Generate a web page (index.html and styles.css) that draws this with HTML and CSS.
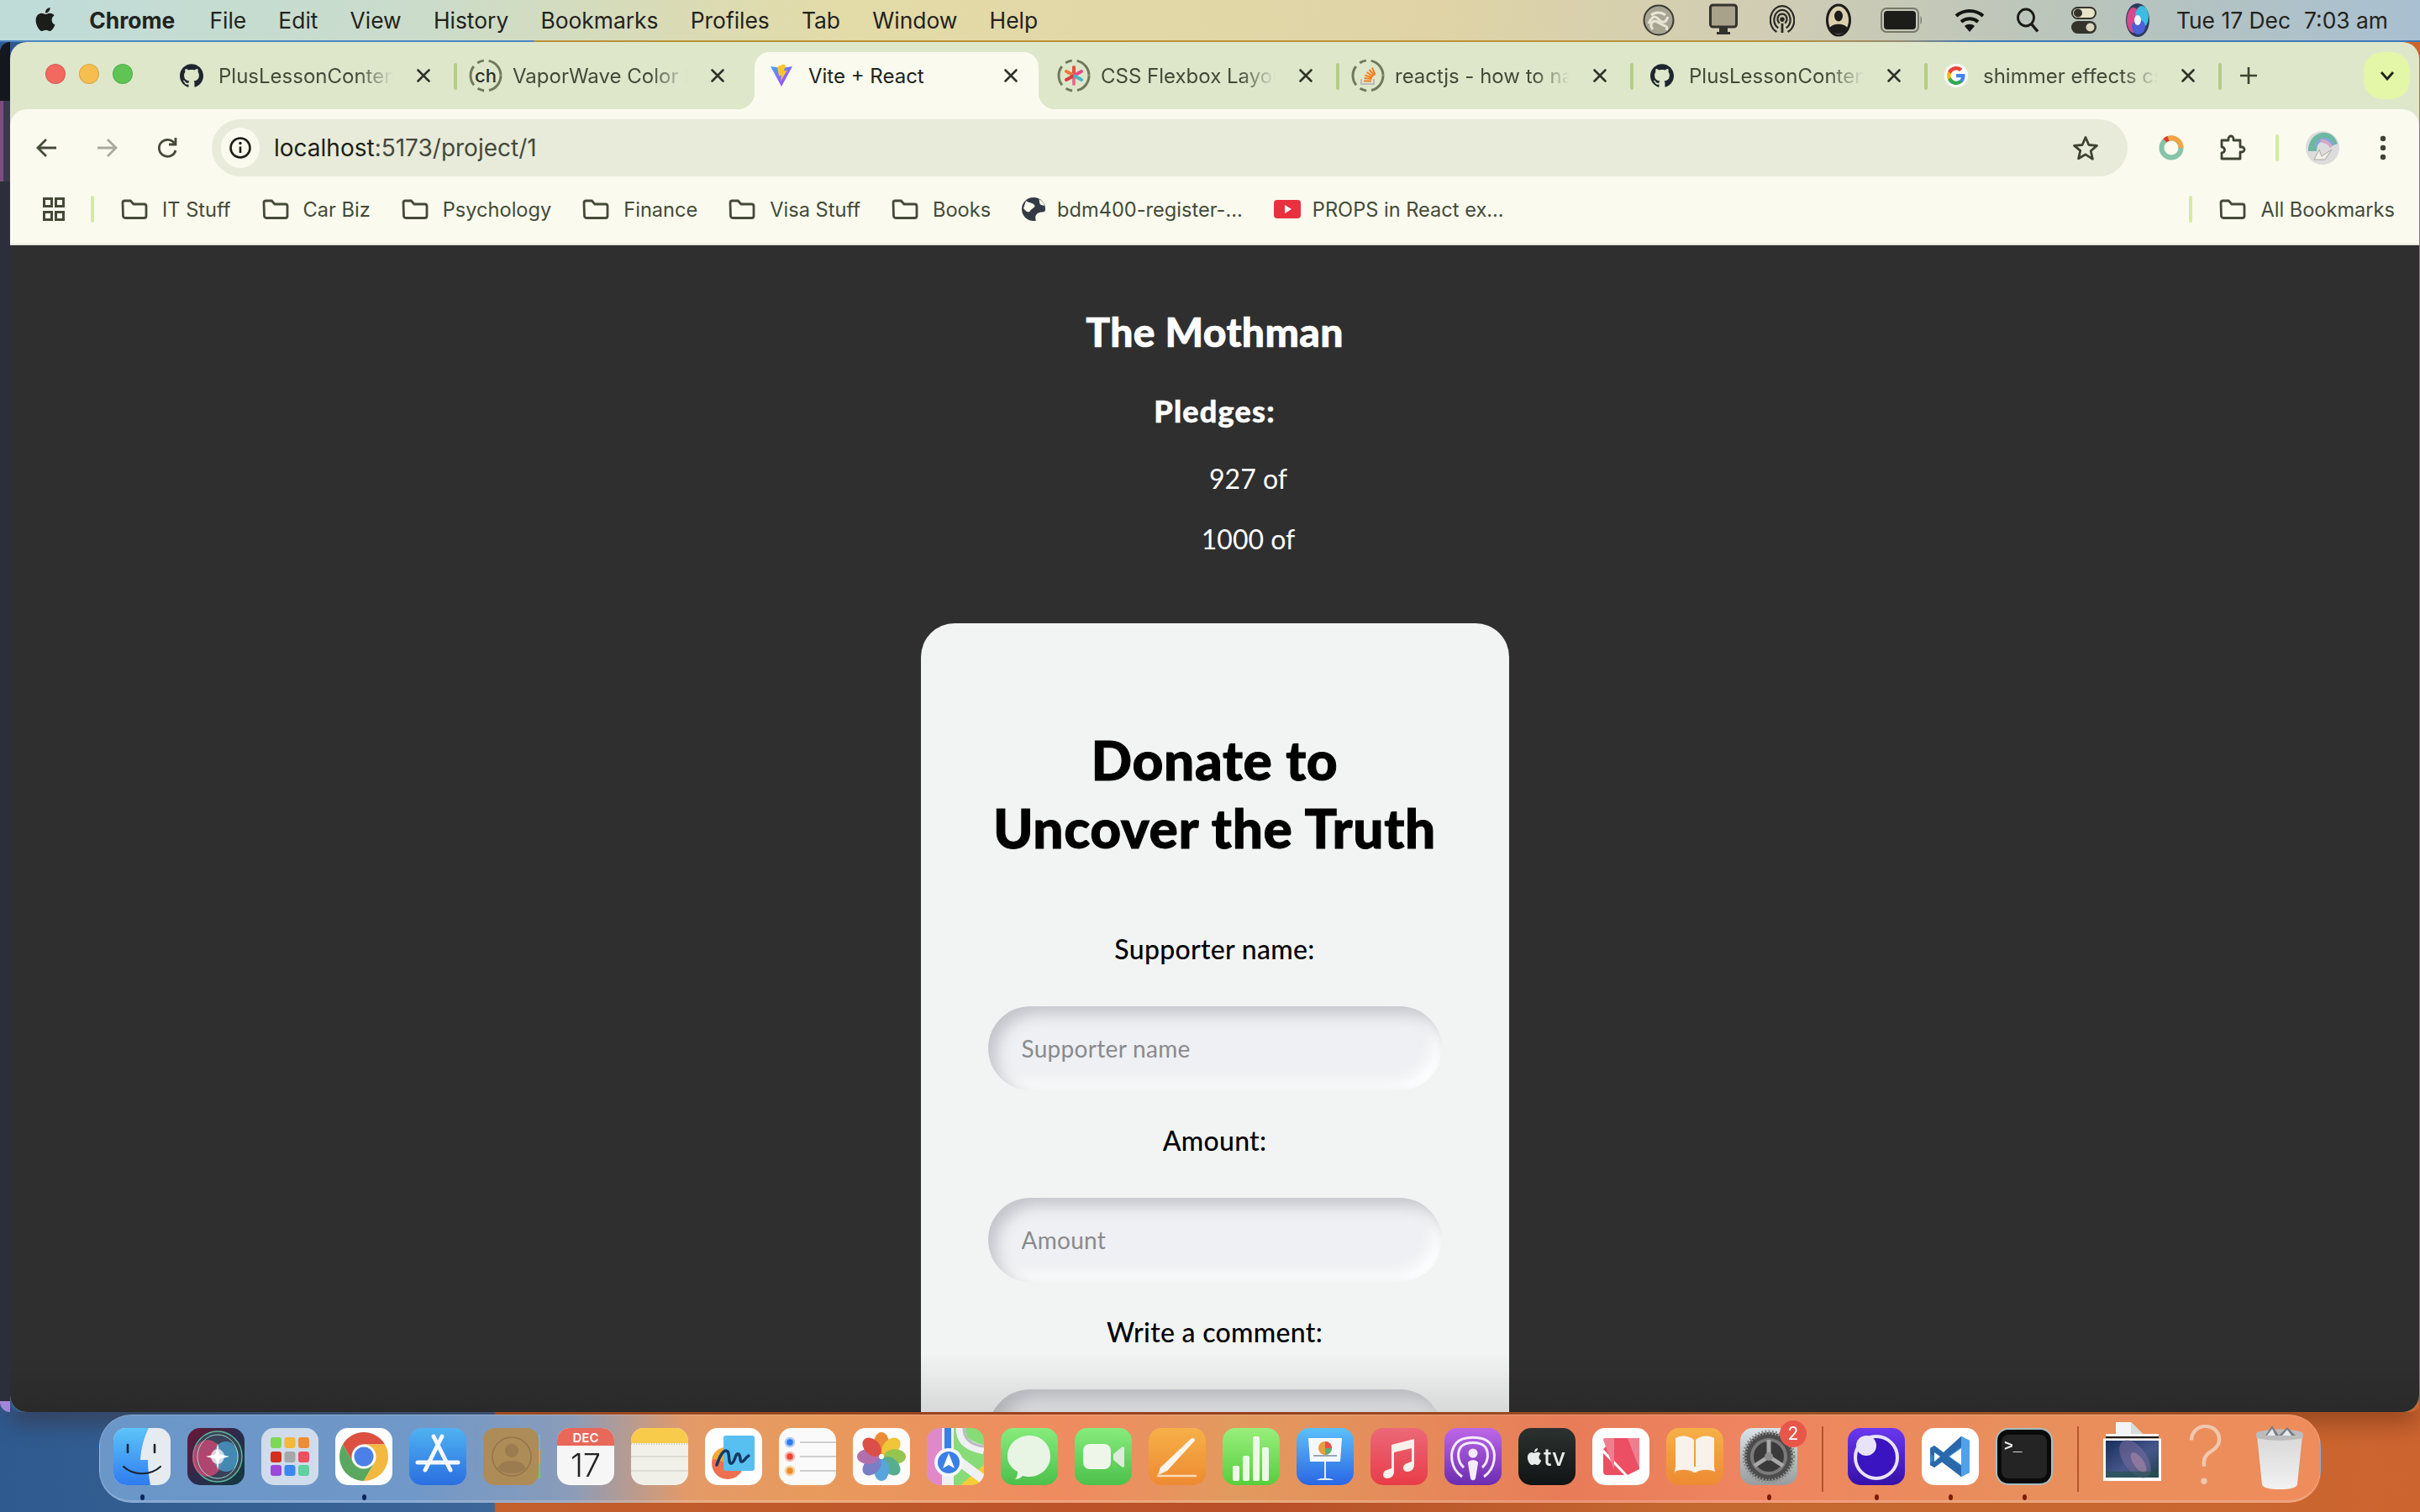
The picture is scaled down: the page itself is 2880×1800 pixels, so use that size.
FILE: index.html
```html
<!DOCTYPE html>
<html lang="en">
<head>
<meta charset="utf-8">
<title>Vite + React</title>
<link rel="stylesheet" href="styles.css">
</head>
<body>
<svg class="defs" aria-hidden="true">
  <defs>
    <linearGradient id="gBlue" x1="0" y1="0" x2="0" y2="1"><stop offset="0" stop-color="#4fb2f2"/><stop offset="1" stop-color="#2a6fe0"/></linearGradient>
    <linearGradient id="gFinder" x1="0" y1="0" x2="0" y2="1"><stop offset="0" stop-color="#5cc4f8"/><stop offset="1" stop-color="#2f7cf0"/></linearGradient>
    <linearGradient id="gSiri" x1="0" y1="0" x2="1" y2="1"><stop offset="0" stop-color="#6c1535"/><stop offset=".5" stop-color="#2c2c4c"/><stop offset="1" stop-color="#103a40"/></linearGradient>
    <linearGradient id="gGreen" x1="0" y1="0" x2="0" y2="1"><stop offset="0" stop-color="#86ec7c"/><stop offset="1" stop-color="#4cc04a"/></linearGradient>
    <linearGradient id="gOrange" x1="0" y1="0" x2="0" y2="1"><stop offset="0" stop-color="#f6b048"/><stop offset="1" stop-color="#ee8a32"/></linearGradient>
    <linearGradient id="gNum" x1="0" y1="0" x2="0" y2="1"><stop offset="0" stop-color="#98ee7c"/><stop offset="1" stop-color="#58ce3c"/></linearGradient>
    <linearGradient id="gKey" x1="0" y1="0" x2="0" y2="1"><stop offset="0" stop-color="#5cc0fa"/><stop offset="1" stop-color="#2a66e4"/></linearGradient>
    <linearGradient id="gMusic" x1="0" y1="0" x2="0" y2="1"><stop offset="0" stop-color="#ec6878"/><stop offset="1" stop-color="#e83c48"/></linearGradient>
    <linearGradient id="gPod" x1="0" y1="0" x2="0" y2="1"><stop offset="0" stop-color="#bc68e8"/><stop offset="1" stop-color="#6c2cb0"/></linearGradient>
    <linearGradient id="gTv" x1="0" y1="0" x2="0" y2="1"><stop offset="0" stop-color="#2c3230"/><stop offset="1" stop-color="#101414"/></linearGradient>
    <linearGradient id="gPurple" x1="0" y1="0" x2="0" y2="1"><stop offset="0" stop-color="#6a38f0"/><stop offset="1" stop-color="#3410a8"/></linearGradient>
    <linearGradient id="gGear" x1="0" y1="0" x2="0" y2="1"><stop offset="0" stop-color="#d8e4e8"/><stop offset="1" stop-color="#9a9c9c"/></linearGradient>
    <linearGradient id="gVite" x1="0" y1="0" x2="1" y2="1"><stop offset="0" stop-color="#41a6ff"/><stop offset="1" stop-color="#bd34fe"/></linearGradient>
    <linearGradient id="gTrash" x1="0" y1="0" x2="0" y2="1"><stop offset="0" stop-color="#d8d8d8"/><stop offset="1" stop-color="#f2f2f2"/></linearGradient>
    <linearGradient id="gSky" x1="0" y1="0" x2="1" y2="1"><stop offset="0" stop-color="#16305c"/><stop offset=".55" stop-color="#46568a"/><stop offset="1" stop-color="#1c4450"/></linearGradient>
    <symbol id="folder" viewBox="0 0 32 24"><path d="M2 4.500a2.500 2.500 0 0 1 2.500-2.500h6.800l3.600 4h12.600a2.500 2.500 0 0 1 2.500 2.500v11.500a2.500 2.500 0 0 1-2.500 2.500h-22.500a2.500 2.500 0 0 1-2.500-2.500z" fill="none" stroke="#454a38" stroke-width="2.800"/></symbol>
    <symbol id="gh" viewBox="0 0 24 24"><path fill="#1f2630" d="M12 .297c-6.630 0-12 5.373-12 12 0 5.303 3.438 9.800 8.205 11.385.600.113.820-.258.820-.577 0-.285-.010-1.040-.015-2.040-3.338.724-4.042-1.610-4.042-1.610C4.422 18.070 3.633 17.700 3.633 17.700c-1.087-.744.084-.729.084-.729 1.205.084 1.838 1.236 1.838 1.236 1.070 1.835 2.809 1.305 3.495.998.108-.776.417-1.305.760-1.605-2.665-.300-5.466-1.332-5.466-5.930 0-1.310.465-2.380 1.235-3.220-.135-.303-.540-1.523.105-3.176 0 0 1.005-.322 3.300 1.230.960-.267 1.980-.399 3-.405 1.020.006 2.040.138 3 .405 2.280-1.552 3.285-1.230 3.285-1.230.645 1.653.240 2.873.120 3.176.765.840 1.230 1.910 1.230 3.220 0 4.610-2.805 5.625-5.475 5.920.420.360.810 1.096.810 2.220 0 1.606-.015 2.896-.015 3.286 0 .315.210.690.825.570C20.565 22.092 24 17.592 24 12.297c0-6.627-5.373-12-12-12"/></symbol>
    <symbol id="closex" viewBox="0 0 20 20"><path d="M3.500 3.500l13 13M16.500 3.500l-13 13" stroke="#2e3228" stroke-width="2.600" fill="none" stroke-linecap="round"/></symbol>
    <symbol id="ring" viewBox="0 0 40 40"><circle cx="20" cy="20" r="18" fill="none" stroke="#6f7a5c" stroke-width="3" stroke-dasharray="24 6 8 6 24 6 8 6"/></symbol>
    <symbol id="apple" viewBox="0 0 24 24"><path d="M12.152 6.896c-.948 0-2.415-1.078-3.960-1.040-2.040.027-3.910 1.183-4.961 3.014-2.117 3.675-.546 9.103 1.519 12.090 1.013 1.454 2.208 3.090 3.792 3.039 1.520-.065 2.090-.987 3.935-.987 1.831 0 2.350.987 3.960.948 1.637-.026 2.676-1.480 3.676-2.948 1.156-1.688 1.636-3.325 1.662-3.415-.039-.013-3.182-1.221-3.220-4.857-.026-3.040 2.480-4.494 2.597-4.559-1.429-2.090-3.623-2.324-4.390-2.376-2-.156-3.675 1.090-4.610 1.090zM15.530 3.830c.843-1.012 1.400-2.427 1.245-3.830-1.207.052-2.662.805-3.532 1.818-.780.896-1.454 2.338-1.273 3.714 1.338.104 2.715-.688 3.559-1.701"/></symbol>
  </defs>
</svg>

<header class="menubar">
  <nav class="menu-left">
    <svg class="apple-logo"><use href="#apple"/></svg>
    <span class="menu-app">Chrome</span>
    <span>File</span><span>Edit</span><span>View</span><span>History</span><span>Bookmarks</span><span>Profiles</span><span>Tab</span><span>Window</span><span>Help</span>
  </nav>
  <div class="menu-right">
    <svg class="mi mi-cc" viewBox="0 0 40 40"><circle cx="20" cy="20" r="17.500" fill="#a8a492" stroke="#3a3a34" stroke-width="2"/><path d="M8 24c3-7 7-11 12-5s9 3 11-3M11 14c5-4 12-4 17 0M13 31c-5-6 0-13 7-8s12 3 9 9" fill="none" stroke="#e8e4d4" stroke-width="3"/></svg>
    <svg class="mi mi-mon" viewBox="0 0 34 40"><rect x="1.500" y="2" width="31" height="26" rx="3" fill="#a9a28a" stroke="#33332d" stroke-width="3"/><path d="M12 29h10v5h3v3H9v-3h3z" fill="#33332d"/></svg>
    <svg class="mi mi-air" viewBox="0 0 32 40" fill="none" stroke="#2a2a26" stroke-width="2.400"><path d="M9 35C1 30 0 21 1.500 15 4 6 10 2 16 2s12 4 14.500 13c1.500 6 1 15-7.500 20"/><path d="M11 30C5 26 5 19 6.500 15 8 10 12 7 16 7s8 3 9.500 8c1.500 4 1.500 11-4.500 15"/><path d="M12.500 24C9.500 21 10 17 11 15c1-2 3-3 5-3s4 1 5 3c1 2 1.500 6-1.500 9"/><circle cx="16" cy="19" r="3" fill="#2a2a26" stroke="none"/><path d="M16 24v12" stroke-width="3"/></svg>
    <svg class="mi mi-usr" viewBox="0 0 30 40"><ellipse cx="15" cy="20" rx="13.500" ry="18" fill="#d8d0ae" stroke="#1c1c1a" stroke-width="3"/><ellipse cx="15" cy="15" rx="5" ry="6.500" fill="#1c1c1a"/><path d="M4 30c3-7 19-7 22 0-3 8-19 8-22 0z" fill="#1c1c1a"/></svg>
    <svg class="mi mi-bat" viewBox="0 0 50 30"><rect x="1" y="1" width="44" height="28" rx="6" fill="none" stroke="#77766a" stroke-width="2"/><rect x="4" y="4" width="38" height="22" rx="4" fill="#1c1c18"/><path d="M47.500 10c2 1 2 9 0 10z" fill="#77766a"/></svg>
    <svg class="mi mi-wifi" viewBox="0 0 36 30" fill="none" stroke="#141410" stroke-width="4"><path d="M2 10c9-8 23-8 32 0M8 17c6-5 14-5 20 0"/><path d="M18 29l-6-7c3-3 9-3 12 0z" fill="#141410" stroke="none"/></svg>
    <svg class="mi mi-search" viewBox="0 0 28 30" fill="none" stroke="#1a1a16" stroke-width="2.800"><ellipse cx="12" cy="12" rx="9.500" ry="10"/><path d="M19 20l7 8.500" stroke-width="3.500"/></svg>
    <svg class="mi mi-ctl" viewBox="0 0 30 32"><rect x="1" y="1" width="28" height="13" rx="6.500" fill="#e8e2c6" stroke="#33332c" stroke-width="2"/><circle cx="8" cy="7.500" r="5" fill="#33332c"/><rect x="0" y="17" width="30" height="15" rx="7.500" fill="#33332c"/><circle cx="22.500" cy="24.500" r="5" fill="#d8d4c0"/></svg>
    <svg class="mi mi-siri" viewBox="0 0 28 40"><ellipse cx="14" cy="20" rx="14" ry="20" fill="#2e3a5c"/><ellipse cx="9" cy="20" rx="8" ry="15" fill="#d8488c"/><ellipse cx="19" cy="16" rx="8" ry="13" fill="#3cbce0"/><ellipse cx="15" cy="28" rx="8" ry="9" fill="#4c60d8"/><ellipse cx="14" cy="20" rx="4" ry="6" fill="#f2f4fa"/></svg>
    <span class="clock"><span>Tue 17 Dec</span><span>7:03 am</span></span>
  </div>
</header>
<div class="menu-line"></div>

<div class="desk">
  <div class="strip"></div>
  <main class="window">
    <div class="tabstrip">
      <div class="lights"><i class="light red"></i><i class="light amber"></i><i class="light green"></i></div>
      <div class="tabs">
        <div class="tab"><svg class="fav"><use href="#gh"/></svg><span class="tab-title">PlusLessonConten</span><svg class="tab-x"><use href="#closex"/></svg></div>
        <div class="tab sep"><span class="fav-ring"><svg class="ring"><use href="#ring"/></svg><span class="ring-ch">ch</span></span><span class="tab-title">VaporWave Color F</span><svg class="tab-x"><use href="#closex"/></svg></div>
        <div class="tab active"><svg class="fav" viewBox="0 0 28 28"><path d="M1 3l13 2 13-2-13 24z" fill="url(#gVite)"/><path d="M16 .500l-7 3 2 11 3-1-1 7 8-13-4 1 2-7z" fill="#fdc52f"/></svg><span class="tab-title">Vite + React</span><svg class="tab-x"><use href="#closex"/></svg></div>
        <div class="tab"><span class="fav-ring"><svg class="ring"><use href="#ring"/></svg><svg class="ring-in" viewBox="0 0 24 24" fill="none" stroke-width="4" stroke-linecap="round"><path d="M12 2v9" stroke="#e8503c"/><path d="M12 13v9" stroke="#e76f8c"/><path d="M3 7l8 4.500" stroke="#ee7a3c"/><path d="M21 7l-8 4.500" stroke="#e84c8c"/><path d="M3 17l8-4.500" stroke="#d83c40"/><path d="M21 17l-8-4.500" stroke="#4cb4c0"/></svg></span><span class="tab-title">CSS Flexbox Layou</span><svg class="tab-x"><use href="#closex"/></svg></div>
        <div class="tab sep"><span class="fav-ring"><svg class="ring"><use href="#ring"/></svg><svg class="ring-in" viewBox="0 0 24 24" fill="none"><path d="M4 16v6h15v-6" stroke="#bcbbbb" stroke-width="2"/><path d="M7 18.500h9M7.500 15l9 1M8.500 11.500l8.500 3M10.500 8l7.500 5M13.500 5l6 7M17 2.500l3.500 8.500" stroke="#f48024" stroke-width="2"/></svg></span><span class="tab-title">reactjs - how to na</span><svg class="tab-x"><use href="#closex"/></svg></div>
        <div class="tab sep"><svg class="fav"><use href="#gh"/></svg><span class="tab-title">PlusLessonConten</span><svg class="tab-x"><use href="#closex"/></svg></div>
        <div class="tab sep"><svg class="fav" viewBox="-2 -2 28 28"><circle cx="12" cy="12" r="14" fill="#fff"/><path fill="#4285F4" d="M22.560 12.250c0-.780-.070-1.530-.200-2.250H12v4.260h5.920c-.260 1.370-1.040 2.530-2.210 3.310v2.770h3.570c2.080-1.920 3.280-4.740 3.280-8.090z"/><path fill="#34A853" d="M12 23c2.970 0 5.460-.980 7.280-2.660l-3.570-2.770c-.980.660-2.230 1.060-3.710 1.060-2.860 0-5.290-1.930-6.160-4.530H2.180v2.840C3.990 20.530 7.700 23 12 23z"/><path fill="#FBBC05" d="M5.840 14.090c-.220-.660-.350-1.360-.350-2.090s.130-1.430.350-2.090V7.070H2.180C1.430 8.550 1 10.220 1 12s.430 3.450 1.180 4.930l2.850-2.220.810-.620z"/><path fill="#EA4335" d="M12 5.380c1.620 0 3.060.560 4.210 1.640l3.150-3.150C17.450 2.090 14.970 1 12 1 7.700 1 3.990 3.470 2.180 7.070l3.660 2.840c.870-2.600 3.300-4.530 6.160-4.530z"/></svg><span class="tab-title">shimmer effects cs</span><svg class="tab-x"><use href="#closex"/></svg></div>
        <div class="tab-new sep"><svg class="plus" viewBox="0 0 22 22"><path d="M11 1v20M1 11h20" stroke="#3e4432" stroke-width="2.600"/></svg></div>
      </div>
      <div class="tab-search"><svg class="chev" viewBox="0 0 18 12"><path d="M2 2l7 8 7-8" fill="none" stroke="#20241a" stroke-width="2.800"/></svg></div>
    </div>

    <div class="toolbar">
      <svg class="nav-btn" viewBox="0 0 28 28"><path d="M25 14H4M13 4L3 14l10 10" fill="none" stroke="#454a38" stroke-width="2.800"/></svg>
      <svg class="nav-btn nav-fwd" viewBox="0 0 28 28"><path d="M3 14h21M15 4l10 10-10 10" fill="none" stroke="#a9ab9f" stroke-width="2.800"/></svg>
      <svg class="nav-btn nav-reload" viewBox="0 0 28 28"><path d="M23 17a10 10 0 1 1-1.500-8.500M23 2v8h-8" fill="none" stroke="#454a38" stroke-width="2.800"/></svg>
      <div class="omni">
        <span class="chip"><svg class="info" viewBox="0 0 26 26"><circle cx="13" cy="13" r="11.500" fill="none" stroke="#1c1e16" stroke-width="2.600"/><path d="M13 11.500v7.500" stroke="#1c1e16" stroke-width="2.600"/><circle cx="13" cy="7.500" r="1.700" fill="#1c1e16"/></svg></span>
        <span class="url"><b>localhost</b>:5173/project/1</span>
        <svg class="star" viewBox="0 0 32 30"><path d="M16 2.500l3.900 9 9.600.9-7.300 6.400 2.200 9.500L16 22.800 7.600 27.800l2.200-9.500L2.500 12.400l9.600-.9z" fill="none" stroke="#3e4432" stroke-width="2.800" stroke-linejoin="round"/></svg>
      </div>
      <svg class="ext-ring" viewBox="0 0 32 32"><circle cx="16" cy="16" r="11.500" fill="none" stroke="#86c3a8" stroke-width="6"/><path d="M8 7.500A11.500 11.500 0 0 1 27.500 16" fill="none" stroke="#f3a444" stroke-width="6"/><path d="M8.500 7.400a11.500 11.500 0 0 1 4-2.500" fill="none" stroke="#de3c34" stroke-width="6"/></svg>
      <svg class="ext-puz" viewBox="0 0 32 32"><path d="M3 7h8V5a3 3 0 0 1 6 0v2h8v8h2a3 3 0 0 1 0 6h-2v8H3v-7a3.500 3.500 0 0 0 0-7z" fill="none" stroke="#3e4432" stroke-width="2.800" stroke-linejoin="round"/></svg>
      <i class="tool-sep"></i>
      <svg class="avatar" viewBox="0 0 40 40"><circle cx="20" cy="20" r="20" fill="#dcdcdc"/><path d="M3 24C3 10 12 2 22 2c8 0 13 5 16 13l-8 3c-1-4-4-7-8-7-5 0-9 5-9 13z" fill="#6cb8a0"/><path d="M10 18c2-6 7-10 13-10 5 0 8 3 11 8l-4 2c-1-4-4-6-8-6s-8 3-9 8z" fill="#7fa7dc"/><path d="M17 10c5-1 11 1 15 8l-3 2c-2-4-6-6-10-6z" fill="#d4a8c8"/><path d="M10 34l6-12 3 8 12-8-8 12z" fill="#f2efe8" stroke="#a8a8a0"/></svg>
      <svg class="dots" viewBox="0 0 8 30"><circle cx="4" cy="4" r="3.200" fill="#3e4432"/><circle cx="4" cy="15" r="3.200" fill="#3e4432"/><circle cx="4" cy="26" r="3.200" fill="#3e4432"/></svg>
    </div>

    <div class="bookmarks">
      <svg class="apps" viewBox="0 0 26 28" fill="none" stroke="#454a38" stroke-width="3"><rect x="1.500" y="1.500" width="9" height="9"/><rect x="15.500" y="1.500" width="9" height="9"/><rect x="1.500" y="17.500" width="9" height="9"/><rect x="15.500" y="17.500" width="9" height="9"/></svg>
      <i class="bm-sep"></i>
      <div class="bm"><svg class="bm-ico"><use href="#folder"/></svg>IT Stuff</div>
      <div class="bm"><svg class="bm-ico"><use href="#folder"/></svg>Car Biz</div>
      <div class="bm"><svg class="bm-ico"><use href="#folder"/></svg>Psychology</div>
      <div class="bm"><svg class="bm-ico"><use href="#folder"/></svg>Finance</div>
      <div class="bm"><svg class="bm-ico"><use href="#folder"/></svg>Visa Stuff</div>
      <div class="bm"><svg class="bm-ico"><use href="#folder"/></svg>Books</div>
      <div class="bm bm-tight"><svg class="bm-globe" viewBox="0 0 28 28"><circle cx="14" cy="14" r="14" fill="#343a44"/><path d="M5 4c4 3 8 2 10 5s-3 4-5 7-5 1-8-3zM17 28c-2-5 0-9 4-10s5 0 7-2c0 6-5 12-11 12zM20 2c2 3 0 5 3 7l4 1c-1-4-3-6-7-8z" fill="#fafbee"/></svg>bdm400-register-...</div>
      <div class="bm bm-tight"><svg class="bm-yt" viewBox="0 0 32 24"><rect width="32" height="22" y="1" rx="4" fill="#e9303f"/><path d="M13 7l8 5-8 5z" fill="#fff"/></svg>PROPS in React ex...</div>
      <i class="bm-sep bm-sep-end"></i>
      <div class="bm bm-all"><svg class="bm-ico"><use href="#folder"/></svg>All Bookmarks</div>
    </div>

    <section class="page">
      <h2 class="project-title">The Mothman</h2>
      <h3 class="pledge-head">Pledges:</h3>
      <ul class="pledge-list">
        <li>927 of</li>
        <li>1000 of</li>
      </ul>
      <form class="card">
        <h2 class="card-title">Donate to<br>Uncover the Truth</h2>
        <label class="field-label" for="sup">Supporter name:</label>
        <input class="field" id="sup" placeholder="Supporter name">
        <label class="field-label" for="amt">Amount:</label>
        <input class="field" id="amt" placeholder="Amount">
        <label class="field-label" for="cmt">Write a comment:</label>
        <input class="field" id="cmt">
      </form>
      <div class="page-fade"></div>
    </section>
  </main>
</div>

<footer class="dock">
  <div class="dk"><svg class="di" viewBox="0 0 68 68"><rect width="68" height="68" rx="15" fill="#e6ebf0"/><path d="M15 0h27c-6 12-9 24-10 38h9c0 10 1 20 3 30H15A15 15 0 0 1 0 53V15A15 15 0 0 1 15 0z" fill="url(#gFinder)"/><path d="M17 20v9M49 20v9" stroke="#1c2430" stroke-width="2.600" stroke-linecap="round"/><path d="M12 46c12 11 32 11 44 0" fill="none" stroke="#1c2430" stroke-width="2.200" stroke-linecap="round"/></svg><i class="dot dot-blue"></i></div>
  <div class="dk"><svg class="di" viewBox="0 0 68 68"><rect width="68" height="68" rx="15" fill="url(#gSiri)"/><ellipse cx="36" cy="34" rx="29" ry="30" fill="#384258" stroke="#5cb89c" stroke-width="1.500"/><ellipse cx="24" cy="36" rx="18" ry="22" fill="#d84878" opacity=".75"/><ellipse cx="46" cy="34" rx="15" ry="18" fill="#48a8d8" opacity=".7"/><ellipse cx="36" cy="34" rx="24" ry="26" fill="none" stroke="#98dcc0" stroke-width="1"/><ellipse cx="36" cy="34" rx="8" ry="9" fill="#fff" opacity=".7"/><path d="M36 18l2 13 12 3-12 3-2 13-2-13-12-3 12-3z" fill="#fff"/></svg></div>
  <div class="dk"><svg class="di" viewBox="0 0 68 68"><rect width="68" height="68" rx="15" fill="#d0dcec"/><g><rect x="11" y="11" width="13" height="13" rx="3" fill="#7ed858"/><rect x="27.500" y="11" width="13" height="13" rx="3" fill="#f4b838"/><rect x="44" y="11" width="13" height="13" rx="3" fill="#ee8c34"/><rect x="11" y="28" width="13" height="13" rx="3" fill="#d43020"/><rect x="27.500" y="28" width="13" height="13" rx="3" fill="#a4a8a8"/><rect x="44" y="28" width="13" height="13" rx="3" fill="#ee5060"/><rect x="11" y="44" width="13" height="13" rx="3" fill="#9c48d8"/><rect x="27.500" y="44" width="13" height="13" rx="3" fill="#3c88f0"/><rect x="44" y="44" width="13" height="13" rx="3" fill="#60d0a0"/></g></svg></div>
  <div class="dk"><svg class="di" viewBox="0 0 68 68"><rect width="68" height="68" rx="15" fill="#fff"/><path d="M8.900 19.500A29 29 0 0 1 59.100 19.500L34 19.500 21.400 41.300z" fill="#dc5040"/><path d="M8.900 19.500A29 29 0 0 0 34 63L46.600 41.300 21.400 41.300z" fill="#5aa860"/><path d="M34 63A29 29 0 0 0 59.100 19.500L34 19.500 46.600 41.300z" fill="#f2b840"/><circle cx="34" cy="34" r="14.500" fill="#fff"/><circle cx="34" cy="34" r="11.500" fill="#4a80e8"/></svg><i class="dot dot-blue"></i></div>
  <div class="dk"><svg class="di" viewBox="0 0 68 68"><rect width="68" height="68" rx="15" fill="url(#gBlue)"/><path d="M39 10L19 50M29 10l20 40" stroke="#f4f8ff" stroke-width="5" stroke-linecap="round" fill="none"/><path d="M10 41h48" stroke="#f4f8ff" stroke-width="5" stroke-linecap="round"/></svg></div>
  <div class="dk"><svg class="di" viewBox="0 0 68 68"><rect x="60" y="8" width="8" height="18" fill="#78b0d8"/><rect x="60" y="26" width="8" height="16" fill="#ee9a2c"/><rect x="60" y="42" width="8" height="18" fill="#6cc868"/><rect width="66" height="68" rx="14" fill="#ae8c58"/><circle cx="34" cy="34" r="23" fill="none" stroke="#93744a" stroke-width="1.500"/><circle cx="34" cy="27" r="8" fill="#9a7c50"/><path d="M17 48c5-12 29-12 34 0-8 8-26 8-34 0z" fill="#9a7c50"/></svg></div>
  <div class="dk"><svg class="di" viewBox="0 0 68 68"><rect width="68" height="68" rx="15" fill="#f6f6f6"/><path d="M0 21V15A15 15 0 0 1 15 0h38a15 15 0 0 1 15 15v6z" fill="#e8685a"/><text class="cal-mon" x="34" y="17">DEC</text><text class="cal-day" x="34" y="58">17</text></svg></div>
  <div class="dk"><svg class="di" viewBox="0 0 68 68"><rect width="68" height="68" rx="15" fill="#f0efe8"/><path d="M0 18V15A15 15 0 0 1 15 0h38a15 15 0 0 1 15 15v3z" fill="#f8cc4a"/><path d="M0 34h68M0 51h68" stroke="#dcdbd4" stroke-width="2"/><path d="M0 19h68" stroke="#bdbcb4" stroke-width="1.500" stroke-dasharray="1 2"/></svg></div>
  <div class="dk"><svg class="di" viewBox="0 0 68 68"><rect width="68" height="68" rx="15" fill="#fff"/><circle cx="27" cy="42" r="19" fill="#ee7050"/><path d="M8 36a19 19 0 0 1 14-13l2 18z" fill="#f2a838"/><rect x="22" y="9" width="37" height="42" rx="3" fill="#58c0f0"/><path d="M14 44c4-12 9-20 13-16 3 4 0 16 5 14 4-2 4-13 8-11 3 2 1 10 4 9 3 0 4-5 8-7" fill="none" stroke="#143864" stroke-width="3.500" stroke-linecap="round"/></svg></div>
  <div class="dk"><svg class="di" viewBox="0 0 68 68"><rect width="68" height="68" rx="15" fill="#fafafa"/><circle cx="13" cy="17" r="5" fill="#2c7cf0" stroke="#a8c8f8" stroke-width="2.500"/><circle cx="13" cy="34" r="5" fill="#e84838" stroke="#f8b8b0" stroke-width="2.500"/><circle cx="13" cy="51" r="5" fill="#ee8c24" stroke="#f8d0a0" stroke-width="2.500"/><path d="M25 17h43M25 34h43M25 51h43" stroke="#cfcfcf" stroke-width="2"/></svg></div>
  <div class="dk"><svg class="di" viewBox="0 0 68 68"><rect width="68" height="68" rx="15" fill="#fbfbfb"/><g class="petals"><ellipse cx="34" cy="18" rx="9" ry="13" fill="#f08c38"/><ellipse cx="34" cy="18" rx="9" ry="13" fill="#f4c838" transform="rotate(45 34 34)"/><ellipse cx="34" cy="18" rx="9" ry="13" fill="#98c850" transform="rotate(90 34 34)"/><ellipse cx="34" cy="18" rx="9" ry="13" fill="#58b090" transform="rotate(135 34 34)"/><ellipse cx="34" cy="18" rx="9" ry="13" fill="#58a8e0" transform="rotate(180 34 34)"/><ellipse cx="34" cy="18" rx="9" ry="13" fill="#7c80c8" transform="rotate(225 34 34)"/><ellipse cx="34" cy="18" rx="9" ry="13" fill="#b870b0" transform="rotate(270 34 34)"/><ellipse cx="34" cy="18" rx="9" ry="13" fill="#e05048" transform="rotate(315 34 34)"/></g></svg></div>
  <div class="dk"><svg class="di" viewBox="0 0 68 68"><clipPath id="mapClip"><rect width="68" height="68" rx="15"/></clipPath><g clip-path="url(#mapClip)"><rect width="68" height="68" fill="#88dc78"/><path d="M0 0h20v68H0z" fill="#e088c8"/><path d="M40 68l28-24v24z" fill="#f8cc38"/><path d="M18 0h14v68H18z" fill="#eef0f2"/><path d="M21 0h8v30h-8z" fill="#3880e8"/><path d="M26 30L68 62M40 0c0 16 10 22 28 26" stroke="#eef0f2" stroke-width="11" fill="none"/><path d="M44 0c0 12 8 20 24 22" stroke="#b8bcc0" stroke-width="3" fill="none"/><circle cx="26" cy="41" r="17" fill="#f4f6f8"/><circle cx="26" cy="41" r="13" fill="#3880e8"/><path d="M26 30l7 18-7-4-7 4z" fill="#fff"/></g></svg></div>
  <div class="dk"><svg class="di" viewBox="0 0 68 68"><rect width="68" height="68" rx="15" fill="url(#gGreen)"/><path d="M34 9c14 0 25 10 25 25 0 13-11 24-25 24-3 0-6-.500-8-1-3 3-6 4-9 4 2-2 3-5 3-9C13 48 8 42 8 34 8 19 20 9 34 9z" fill="#e8f4e4"/></svg></div>
  <div class="dk"><svg class="di" viewBox="0 0 68 68"><rect width="68" height="68" rx="15" fill="url(#gGreen)"/><rect x="10" y="19" width="33" height="30" rx="8" fill="#eef6ea"/><path d="M46 31l11-9c1 0 2 1 2 2v21c0 1-1 2-2 2l-11-9z" fill="#dcecd8"/></svg></div>
  <div class="dk"><svg class="di" viewBox="0 0 68 68"><rect width="68" height="68" rx="15" fill="url(#gOrange)"/><path d="M11 56l3-9L50 13c2-2 5-1 5 2L22 51z" fill="#fbf4ea"/><path d="M11 57h45" stroke="#f8dcb8" stroke-width="2.500" stroke-linecap="round"/></svg></div>
  <div class="dk"><svg class="di" viewBox="0 0 68 68"><rect width="68" height="68" rx="15" fill="url(#gNum)"/><g fill="#eef8e8"><rect x="12" y="45" width="8" height="18" rx="2"/><rect x="24" y="33" width="8" height="30" rx="2"/><rect x="36" y="10" width="8" height="53" rx="2"/><rect x="47" y="23" width="8" height="40" rx="2"/></g></svg></div>
  <div class="dk"><svg class="di" viewBox="0 0 68 68"><rect width="68" height="68" rx="15" fill="url(#gKey)"/><path d="M14 12h40l-2 28H16z" fill="#f4f8fc"/><circle cx="34" cy="24" r="8" fill="#e89c40"/><path d="M34 24V16a8 8 0 0 1 8 8z" fill="#e85048"/><path d="M34 24h8a8 8 0 0 1-8 8z" fill="#58b078"/><path d="M20 33h28" stroke="#98a8b8" stroke-width="2"/><path d="M33 40h2v21h-2z" fill="#e4ecf4"/><path d="M24 62c3-3 17-3 20 0z" fill="#e4ecf4"/></svg></div>
  <div class="dk"><svg class="di" viewBox="0 0 68 68"><rect width="68" height="68" rx="15" fill="url(#gMusic)"/><path d="M25 20l27-7v31c0 5-4 8-8 8-3 0-5-2-5-4 0-4 3-6 7-7l3-1V24l-21 5v23c0 5-4 8-8 8-3 0-5-2-5-4 0-4 3-6 7-7l3-1z" fill="#f8f0ea"/></svg></div>
  <div class="dk"><svg class="di" viewBox="0 0 68 68"><rect width="68" height="68" rx="15" fill="url(#gPod)"/><g fill="none" stroke="#f4ecfa" stroke-width="3"><path d="M21 58C7 48 5 29 14 18 22 9 46 9 54 18c9 11 7 30-7 40"/><path d="M23 47c-8-7-8-19-3-25 6-6 22-6 28 0 5 6 5 18-3 25"/></g><circle cx="34" cy="30" r="5.500" fill="#f4ecfa"/><path d="M28 42c0-5 12-5 12 0l-3 18c-1 3-5 3-6 0z" fill="#f4ecfa"/></svg></div>
  <div class="dk"><svg class="di" viewBox="0 0 68 68"><rect width="68" height="68" rx="15" fill="url(#gTv)"/><use href="#apple" x="9" y="22" width="20" height="24" fill="#e8ecea"/><text class="tv-text" x="30" y="45">tv</text></svg></div>
  <div class="dk"><svg class="di" viewBox="0 0 68 68"><rect width="68" height="68" rx="15" fill="#fff"/><path d="M13 25l13-13h30v37l-14 7zM13 30l25 26H17a4 4 0 0 1-4-4z" fill="#ec4e64"/><path d="M13 14a2 2 0 0 1 2-2h11v38zM42 12l14 0v37z" fill="#f07e8e"/></svg></div>
  <div class="dk"><svg class="di" viewBox="0 0 68 68"><rect width="68" height="68" rx="15" fill="url(#gOrange)"/><path d="M11 12c7-4 16-3 22 2v36c-6-5-15-5-22-1l-1 5 1-2zM35 14c6-5 15-6 22-2v37c-7-4-16-4-22 1z" fill="#f8f2ea"/><path d="M11 46l-1 6c7-3 16-3 23 1h2c7-4 16-4 23-1l-1-6z" fill="#f8f2ea"/></svg></div>
  <div class="dk"><svg class="di" viewBox="0 0 68 68"><rect width="68" height="68" rx="15" fill="url(#gGear)"/><circle cx="34" cy="34" r="29" fill="#4c4c4c"/><circle cx="34" cy="34" r="29" fill="none" stroke="#8c8c8c" stroke-width="5" stroke-dasharray="2 2"/><circle cx="34" cy="34" r="22" fill="#7a7a7a"/><circle cx="34" cy="34" r="18" fill="#3a3a3a"/><path d="M34 34V14M34 34L17 45M34 34l17 11" stroke="#a8a8a8" stroke-width="5"/><circle cx="34" cy="34" r="5" fill="#8c8c8c"/></svg><span class="badge">2</span><i class="dot dot-red"></i></div>
  <i class="dock-sep"></i>
  <div class="dk"><svg class="di" viewBox="0 0 68 68"><rect width="68" height="68" rx="15" fill="url(#gPurple)"/><circle cx="34" cy="35" r="25" fill="#3a14c0" stroke="#e8e2fa" stroke-width="4"/><circle cx="22" cy="21" r="12" fill="#e8e2fa"/></svg><i class="dot dot-red"></i></div>
  <div class="dk"><svg class="di" viewBox="0 0 68 68"><rect width="68" height="68" rx="15" fill="#fff"/><path d="M47 10l10 5v38l-10 5L26 39 15 47l-5-3V24l5-3 11 8z" fill="#2f7fc8"/><path d="M47 10l10 5v38l-10 5z" fill="#4fa2ea"/><path d="M10 24l5-3 32 25v12L10 30z" fill="#2a68ac"/><path d="M26 29l21-19v12L31 34z" fill="#2a68ac"/><path d="M47 24v20L33 34z" fill="#fff"/><path d="M10 44l5 3 11-8-4-5-12 8z" fill="#2a68ac"/><path d="M15 29l7 5-7 6z" fill="#fff"/></svg><i class="dot dot-red"></i></div>
  <div class="dk"><svg class="di" viewBox="0 0 68 68"><rect width="68" height="68" rx="15" fill="#a8bec4"/><rect x="2" y="2" width="64" height="64" rx="13" fill="#0a0a0a"/><rect x="7" y="8" width="54" height="52" rx="8" fill="#242424"/><text class="term-text" x="10" y="27">&gt;_</text></svg><i class="dot dot-red"></i></div>
  <i class="dock-sep"></i>
  <div class="dk dk-free"><svg class="di-thumb" viewBox="0 0 69 70"><path d="M15 0h18l16 16H15z" fill="#f2f4f6"/><path d="M33 0l16 16H33z" fill="#d8dbde"/><rect x="3" y="14" width="63" height="3" fill="#f4f4f4"/><rect x="3" y="17" width="63" height="2.500" fill="#1c1c1c"/><rect y="19.500" width="69" height="50.500" fill="#fff"/><rect x="3" y="22" width="63" height="44" fill="url(#gSky)"/><ellipse cx="38" cy="44" rx="14" ry="26" transform="rotate(-35 38 44)" fill="#7a6c9c" opacity=".55"/><ellipse cx="42" cy="48" rx="6" ry="14" transform="rotate(-35 42 48)" fill="#b08ca8" opacity=".55"/><path d="M3 58c20 2 44 0 63 1v7H3z" fill="#23544e" opacity=".6"/></svg></div>
  <div class="dk dk-free"><span class="q-mark">?</span></div>
  <div class="dk dk-free"><svg class="di-trash" viewBox="0 0 62 78"><path d="M4 14l6 58c1 4 8 6 21 6s20-2 21-6l6-58z" fill="url(#gTrash)"/><path d="M3 11c8-6 48-6 56 0v5c-8 5-48 5-56 0z" fill="#bcbcbc"/><path d="M14 14l8-12 8 12 10-10 10 10z" fill="#7a8088"/><path d="M16 14l6-8 4 8zM34 14l6-7 5 7z" fill="#e8eaec"/></svg></div>
</footer>
</body>
</html>
```

FILE: styles.css
```css
* { box-sizing: border-box; }
html, body { margin: 0; padding: 0; }
body {
  width: 2880px;
  height: 1800px;
  overflow: hidden;
  font-family: Inter, "Liberation Sans", sans-serif;
  background:
    linear-gradient(90deg, #2f5a8f 0, #3c6698 588px, #c4602c 590px, #b94f28 1500px, #c46a30 2050px, #cc6430 2880px);
}
.defs { position: absolute; width: 0; height: 0; }

/* menu bar */
.menubar {
  height: 48px;
  display: flex;
  justify-content: space-between;
  align-items: center;
  background: linear-gradient(90deg, #bfdcd9 0, #cbdccb 500px, #e3dba8 1000px, #e0d4a6 1700px, #d0cdb4 2100px, #b8c4bc 2500px, #a9c0d2 2880px);
  font-size: 26.400px;
  color: #23231d;
}
.menu-left { display: flex; align-items: center; gap: 38.200px; padding-left: 40px; }
.apple-logo { width: 28px; height: 32px; fill: #1c1c1a; margin-top: -2px; }
.menu-app { font-weight: 700; margin-right: 3px; }
.menu-right { display: flex; align-items: center; padding-right: 38px; }
.mi { display: block; flex: none; }
.mi-cc { width: 40px; height: 40px; margin-right: 40px; }
.mi-mon { width: 34px; height: 40px; margin-right: 38px; }
.mi-air { width: 30px; height: 40px; margin-right: 37px; }
.mi-usr { width: 30px; height: 40px; margin-right: 35px; }
.mi-bat { width: 50px; height: 30px; margin-right: 38px; }
.mi-wifi { width: 36px; height: 30px; margin-right: 37px; }
.mi-search { width: 28px; height: 30px; margin-right: 38px; }
.mi-ctl { width: 30px; height: 32px; margin-right: 35px; }
.mi-siri { width: 28px; height: 40px; margin-right: 32px; }
.clock { display: flex; gap: 16px; white-space: nowrap; }
.menu-line {
  height: 2px;
  background: linear-gradient(90deg, #4a86c0 0, #4a86c0 635px, #b89238 636px, #b89238 2100px, #9a8c70 2260px, #3e78b8 2350px, #3e78b8 2880px);
}

/* desk + window */
.desk { position: relative; display: flex; height: 1631px; padding-right: 1px; }
.strip {
  width: 12px;
  border-radius: 16px 0 0 16px;
  background:
    linear-gradient(#7c4e80, #7c4e80) 0 70px / 4px 96px no-repeat,
    linear-gradient(#15171e 0 70px, #3a3a4c 70px 166px, #2c2e3c 166px 1618px, #a484d8 1618px 1631px);
}
.window {
  position: relative;
  flex: 1;
  display: flex;
  flex-direction: column;
  border-radius: 20px;
  overflow: hidden;
  background: #dfe7cb;
}
.desk::after {
  content: "";
  position: absolute;
  left: 12px; right: 1px; bottom: 0; height: 20px;
  border-radius: 20px;
  box-shadow: 0 8px 30px rgba(60, 20, 0, .55);
  z-index: -1;
}

/* tab strip */
.tabstrip { height: 80px; flex: none; display: flex; align-items: flex-end; position: relative; z-index: 2; }
.lights { width: 180px; height: 68px; flex: none; display: flex; gap: 16px; align-items: center; padding: 0 0 16px 42px; }
.light { width: 24px; height: 24px; border-radius: 50%; border: 1px solid rgba(0, 0, 0, .12); }
.red { background: #f1695f; }
.amber { background: #f6bd4f; }
.green { background: #5fc454; }
.tabs { display: flex; flex: none; }
.tab {
  position: relative;
  flex: none;
  width: 350px;
  height: 68px;
  display: flex;
  align-items: center;
  padding: 0 0 12px 22px;
  color: #444a38;
  font-size: 24px;
}
.sep::before {
  content: "";
  position: absolute;
  left: -2px; top: 13px;
  width: 4px; height: 32px;
  border-radius: 2px;
  background: #b5cd85;
}
.fav { width: 28px; height: 28px; flex: none; overflow: visible; }
.fav-ring { position: relative; width: 28px; height: 28px; flex: none; display: flex; align-items: center; justify-content: center; }
.ring { position: absolute; left: -6px; top: -6px; width: 40px; height: 40px; }
.ring-ch { font-size: 22px; color: #2c3028; font-weight: 500; }
.ring-in { width: 24px; height: 24px; }
.tab-title {
  flex: none;
  width: 208px;
  margin-left: 18px;
  white-space: nowrap;
  -webkit-mask-image: linear-gradient(90deg, #000 165px, transparent 208px);
  mask-image: linear-gradient(90deg, #000 165px, transparent 208px);
}
.tab-x { width: 20px; height: 20px; margin-left: 26px; flex: none; }
.tab.active {
  width: 338px;
  margin: 0 6px;
  padding-left: 18px;
  background: #fafbee;
  border-radius: 18px 18px 0 0;
  color: #20241a;
}
.tab.active .tab-title { -webkit-mask-image: none; mask-image: none; }
.tab.active::before, .tab.active::after {
  content: "";
  position: absolute;
  bottom: 0;
  width: 20px; height: 20px;
}
.tab.active::before { left: -20px; background: radial-gradient(circle at 0 0, transparent 20px, #fafbee 20.500px); }
.tab.active::after { right: -20px; background: radial-gradient(circle at 100% 0, transparent 20px, #fafbee 20.500px); }
.tab.active .tab-x { margin-left: 23px; }
.tab-new { position: relative; flex: none; width: 80px; height: 68px; display: flex; align-items: center; padding: 0 0 12px 23px; }
.plus { width: 22px; height: 22px; }
.tab-search {
  width: 55px; height: 56px;
  flex: none;
  border-radius: 22px;
  background: #e4f6a8;
  display: flex; align-items: center; justify-content: center;
  margin: 0 11px 12px auto;
}
.chev { width: 18px; height: 12px; }

/* toolbar */
.toolbar {
  height: 80px;
  flex: none;
  padding: 12px 0 0 30px;
  display: flex;
  align-items: center;
  background: #fafbee;
  border-radius: 20px 20px 0 0;
}
.nav-btn { width: 28px; height: 28px; flex: none; }
.nav-fwd { margin-left: 43px; }
.nav-reload { margin-left: 45px; }
.omni {
  width: 2280px;
  height: 68px;
  flex: none;
  margin-left: 38px;
  padding: 0 34px 0 11px;
  display: flex;
  align-items: center;
  border-radius: 34px;
  background: #e8ebda;
}
.chip { width: 46px; height: 48px; border-radius: 50%; background: #fafbee; display: flex; align-items: center; justify-content: center; flex: none; }
.info { width: 26px; height: 26px; }
.url { margin-left: 17px; font-size: 28px; color: #45483c; white-space: nowrap; }
.url b { font-weight: 400; color: #1c1e16; }
.star { width: 32px; height: 30px; margin-left: auto; }
.ext-ring { width: 32px; height: 32px; margin-left: 36px; flex: none; }
.ext-puz { width: 32px; height: 32px; margin-left: 41px; flex: none; }
.tool-sep { width: 4px; height: 32px; margin-left: 35px; background: #d5eb9f; border-radius: 2px; flex: none; }
.avatar { width: 40px; height: 40px; margin-left: 32px; flex: none; }
.dots { width: 8px; height: 30px; margin-left: 48px; flex: none; }

/* bookmarks */
.bookmarks {
  height: 82px;
  flex: none;
  padding: 0 29px 2px 39px;
  display: flex;
  align-items: center;
  background: #fafbee;
  border-bottom: 2px solid #e8e9dc;
  color: #444a38;
  font-size: 23.600px;
}
.apps { width: 26px; height: 28px; flex: none; }
.bm-sep { width: 4px; height: 32px; margin: 0 32px 0 31px; background: #d5eb9f; border-radius: 2px; flex: none; }
.bm { display: flex; align-items: center; gap: 17px; margin-right: 37px; white-space: nowrap; }
.bm-ico { width: 32px; height: 24px; flex: none; }
.bm-tight { gap: 14px; }
.bm-globe { width: 28px; height: 28px; flex: none; }
.bm-yt { width: 32px; height: 24px; flex: none; }
.bm-sep-end { margin-left: auto; }
.bm-all { margin-right: 0; }

/* page */
.page {
  position: relative;
  flex: 1;
  overflow: hidden;
  padding-top: 73px;
  background: #2f2f2f;
  color: #fff;
  text-align: center;
  font-family: Lato, "Noto Sans", sans-serif;
}
.project-title { margin: 0; font-size: 48px; line-height: 60px; font-weight: 900; letter-spacing: .35px; -webkit-text-stroke: .7px #fff; }
.pledge-head { margin: 41px 0 0; font-size: 36px; line-height: 46px; font-weight: 900; letter-spacing: 1.200px; -webkit-text-stroke: .5px #fff; }
.pledge-list { list-style: none; margin: 38px 0 0; padding: 0 0 0 80px; font-size: 32px; line-height: 40px; }
.pledge-list li + li { margin-top: 32px; }
.card {
  width: 700px;
  margin: 80px auto 0;
  padding: 122px 80px 80px;
  border-radius: 40px;
  background: #f2f3f3;
  color: #000;
  display: flex;
  flex-direction: column;
}
.card-title { margin: 0 0 84px; font-size: 64px; line-height: 81px; font-weight: 900; letter-spacing: .65px; -webkit-text-stroke: 1px #000; }
.field-label { font-size: 32px; line-height: 40px; margin-bottom: 48px; font-weight: 500; letter-spacing: .3px; }
.field {
  width: 540px;
  height: 100px;
  flex: none;
  margin-bottom: 40px;
  padding: 0 40px;
  border: 0;
  outline: 0;
  border-radius: 50px;
  background: #eef0f3;
  box-shadow: inset 9px 9px 18px #c2c4c9, inset -9px -9px 18px #fff;
  font-family: Lato, "Noto Sans", sans-serif;
  font-size: 28px;
  letter-spacing: .3px;
  color: #000;
}
.field::placeholder { color: #8a8a8d; opacity: 1; }
.page-fade {
  position: absolute;
  left: 0; right: 0; bottom: 0;
  height: 70px;
  background: linear-gradient(rgba(0, 0, 0, 0), rgba(0, 0, 0, .11));
  pointer-events: none;
}

/* dock */
.dock {
  position: relative;
  z-index: 1;
  width: 2644px;
  height: 105px;
  margin: 3px 0 0 118px;
  padding: 15px 15px 0 16px;
  display: flex;
  gap: 20px;
  border-radius: 38px;
  border: 1px solid rgba(255, 255, 255, .2);
  border-bottom-width: 3px;
  background: linear-gradient(90deg, #6a96c8 0, #7098c8 370px, #8a9cba 560px, #e49a68 700px, #e89a5c 850px, #ef8b60 1150px, #e29a5e 1350px, #e87c58 1750px, #ef8460 1950px, #e88f5c 2300px, #ef8c5c 2644px);
}
.dk { position: relative; width: 68px; flex: none; display: flex; flex-direction: column; align-items: center; }
.di { width: 68px; height: 68px; display: block; flex: none; }
.dot { width: 5px; height: 7px; margin-top: 11px; border-radius: 50%; flex: none; }
.dot-blue { background: #0a2460; }
.dot-red { background: #7a1c00; }
.dock-sep { width: 2px; height: 78px; margin: -2px 9px 0; background: #b4562a; flex: none; }
.badge {
  position: absolute;
  top: -9px; right: -11px;
  width: 32px; height: 32px;
  border-radius: 50%;
  background: #e8564a;
  color: #fff;
  font-size: 21px;
  line-height: 32px;
  text-align: center;
}
.cal-mon { font-size: 15px; font-weight: 600; fill: #fff; text-anchor: middle; }
.cal-day { font-size: 38px; font-weight: 300; fill: #222; text-anchor: middle; }
.tv-text { font-size: 28px; font-weight: 500; fill: #e8ecea; }
.term-text { font-size: 18px; font-weight: 700; fill: #f0f0f0; font-family: "Liberation Mono", monospace; }
.petals { mix-blend-mode: multiply; }
.dk-free { overflow: visible; }
.di-thumb { width: 69px; height: 70px; margin-top: -7px; flex: none; overflow: visible; }
.q-mark { font-family: Inter, "Liberation Sans", sans-serif; font-size: 96px; line-height: 76px; color: #efc8ae; font-weight: 200; margin-top: -6px; }
.di-trash { width: 62px; height: 78px; margin-top: -5px; flex: none; }
```
